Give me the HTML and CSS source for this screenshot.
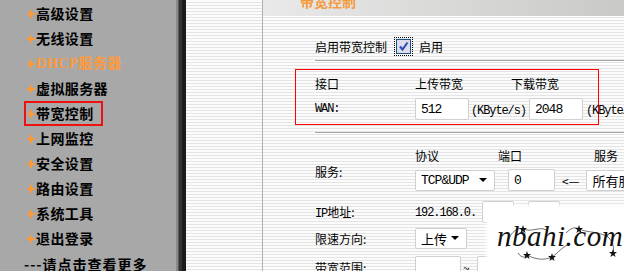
FILE: index.html
```html
<!DOCTYPE html>
<html lang="zh-CN">

<head>
    <meta charset="UTF-8">
    <title>带宽控制</title>
    <link rel="stylesheet" href="styles.css">
</head>

<body>
    <div class="page">
        <nav class="sidebar">
            <ul class="menu">
                <li><a><svg class="dot" viewBox="0 0 8 8"><path d="M3 0h2v3h3v2H5v3H3V5H0V3h3z"/></svg>高级设置</a></li>
                <li><a><svg class="dot" viewBox="0 0 8 8"><path d="M3 0h2v3h3v2H5v3H3V5H0V3h3z"/></svg>无线设置</a></li>
                <li class="dhcp"><a><svg class="dot" viewBox="0 0 8 8"><path d="M3 0h2v3h3v2H5v3H3V5H0V3h3z"/></svg>DHCP服务器</a></li>
                <li><a><svg class="dot" viewBox="0 0 8 8"><path d="M3 0h2v3h3v2H5v3H3V5H0V3h3z"/></svg>虚拟服务器</a></li>
                <li class="current"><a><svg class="dot" viewBox="0 0 8 8"><path d="M3 0h2v3h3v2H5v3H3V5H0V3h3z"/></svg>带宽控制</a></li>
                <li><a><svg class="dot" viewBox="0 0 8 8"><path d="M3 0h2v3h3v2H5v3H3V5H0V3h3z"/></svg>上网监控</a></li>
                <li><a><svg class="dot" viewBox="0 0 8 8"><path d="M3 0h2v3h3v2H5v3H3V5H0V3h3z"/></svg>安全设置</a></li>
                <li><a><svg class="dot" viewBox="0 0 8 8"><path d="M3 0h2v3h3v2H5v3H3V5H0V3h3z"/></svg>路由设置</a></li>
                <li><a><svg class="dot" viewBox="0 0 8 8"><path d="M3 0h2v3h3v2H5v3H3V5H0V3h3z"/></svg>系统工具</a></li>
                <li><a><svg class="dot" viewBox="0 0 8 8"><path d="M3 0h2v3h3v2H5v3H3V5H0V3h3z"/></svg>退出登录</a></li>
            </ul>
            <p class="more">---请点击查看更多</p>
        </nav>
        <div class="divider"></div>
        <div class="gutter"></div>
        <main class="main">
            <div class="title-bar">
                <h1>带宽控制</h1>
            </div>
            <div class="form">
                <div class="row-enable">
                    <span>启用带宽控制</span>
                    <span class="check">
                        <svg viewBox="0 0 15 15" width="15" height="15">
                            <rect x="0.5" y="0.5" width="14" height="14" fill="#dcdcea" stroke="#1c5180"/>
                            <path d="M4 7.5l2.5 3l5-7" fill="none" stroke="#2a48b8" stroke-width="2"/>
                        </svg>
                    </span>
                    <span class="enable-text">启用</span>
                </div>
                <div class="rule"></div>

                <div class="wan-box">
                    <div class="wan-head">
                        <span class="col-label">接口</span>
                        <span class="col-up">上传带宽</span>
                        <span>下载带宽</span>
                    </div>
                    <div class="wan-row">
                        <span class="col-label mono">WAN:</span>
                        <span class="field w54">512</span>
                        <span class="unit mono">(KByte/s)</span>
                        <span class="field w54">2048</span>
                        <span class="unit mono">(KByte/s)</span>
                    </div>
                </div>
                <div class="rule rule-2"></div>

                <div class="service">
                    <span class="service-label">服务:</span>
                    <div class="service-head">
                        <span class="h-proto">协议</span>
                        <span class="h-port">端口</span>
                        <span>服务</span>
                    </div>
                    <div class="service-row">
                        <span class="field select w80 mono">TCP&amp;UDP<svg class="arrow" viewBox="0 0 8 4"><path d="M0 0h8L4 4z"/></svg></span>
                        <span class="field w47 port mono">0</span>
                        <span class="back">&lt;—</span>
                        <span class="field select w80">所有服务<svg class="arrow" viewBox="0 0 8 4"><path d="M0 0h8L4 4z"/></svg></span>
                    </div>
                </div>

                <div class="line ip-row">
                    <span class="col-label"><span class="mono">IP</span>地址:</span>
                    <span class="mono ip-text">192.168.0.</span>
                    <span class="field w32"></span>
                    <span class="field w32 ip-end"></span>
                </div>
                <div class="line dir-row">
                    <span class="col-label">限速方向:</span>
                    <span class="field select w52">上传<svg class="arrow" viewBox="0 0 8 4"><path d="M0 0h8L4 4z"/></svg></span>
                </div>
                <div class="line range-row">
                    <span class="col-label">带宽范围:</span>
                    <span class="field w46"></span>
                    <span class="tilde">~</span>
                    <span class="field w46"></span>
                </div>
            </div>
        </main>

        <div class="watermark">
            <svg class="stars" viewBox="0 0 136 64" width="136" height="64">
                <g fill="none" stroke="#333" stroke-width="0.7">
                    <path d="M18 40 C22 24 30 20 35 22 C45 26 52 18 60 24"/>
                    <path d="M30 46 C34 52 38 50 39 48 C46 52 56 54 64 50 C70 46 74 40 80 38"/>
                    <path d="M78 26 C84 20 88 20 91 22 C100 26 110 24 120 30 C126 36 126 42 125 46"/>
                </g>
                <g fill="#111">
                    <path d="M35 18l1 3l3 0l-2.4 2l1 3l-2.6-1.8l-2.6 1.8l1-3l-2.4-2l3 0z"/>
                    <path d="M39 44l1 3l3 0l-2.4 2l1 3l-2.6-1.8l-2.6 1.8l1-3l-2.4-2l3 0z"/>
                    <path d="M64 46l1 3l3 0l-2.4 2l1 3l-2.6-1.8l-2.6 1.8l1-3l-2.4-2l3 0z"/>
                    <path d="M91 18l1 3l3 0l-2.4 2l1 3l-2.6-1.8l-2.6 1.8l1-3l-2.4-2l3 0z"/>
                    <path d="M125 42l1 3l3 0l-2.4 2l1 3l-2.6-1.8l-2.6 1.8l1-3l-2.4-2l3 0z"/>
                </g>
            </svg>
            <span class="brand">nbahi.com</span>
        </div>
    </div>
</body>

</html>
```

FILE: styles.css
```css
* {
    padding: 0;
    margin: 0;
}

ul {
    list-style-type: none;
}

body {
    width: 624px;
    height: 271px;
    overflow: hidden;
    font-family: "Noto Sans CJK SC", sans-serif;
    font-size: 12px;
    color: #000;
}

.page {
    position: relative;
    display: flex;
    height: 271px;
}

/* 左侧菜单 */
.sidebar {
    flex: none;
    width: 176px;
    background-color: #a8a8a8;
    font-weight: bold;
    font-size: 14px;
    letter-spacing: 0.4px;
    white-space: nowrap;
}

.menu {
    padding-top: 1px;
}

.menu li {
    height: 25px;
    padding-left: 24px;
}

.menu a {
    display: inline-flex;
    align-items: center;
    box-sizing: border-box;
    height: 25px;
    padding-left: 1px;
    border: 2px solid transparent;
    line-height: 21px;
}

.menu .dot {
    width: 8px;
    height: 8px;
    margin-right: 1px;
    fill: #ff9a33;
    flex: none;
}

.menu .dhcp a {
    color: #ff9a3c;
    font-family: "Liberation Serif", "Noto Sans CJK SC", serif;
    letter-spacing: 0.6px;
}

.menu .current a {
    width: 79px;
    border-color: #ee1111;
}

.more {
    padding: 3px 0 0 24px;
    line-height: 20px;
    letter-spacing: 1px;
}

.divider {
    flex: none;
    width: 10px;
    background: linear-gradient(to right, #8a8a8a 0 2px, #595959 2px 3px, #333 3px 6px, #1c1c1c 6px);
}

.gutter,
.main {
    background: repeating-linear-gradient(to bottom, #fcfcfc 0 2px, #e4e4e4 2px 3px);
}

.gutter {
    flex: none;
    width: 76px;
}

/* 右侧内容 */
.main {
    flex: 1;
    min-width: 0;
    border-left: 1px solid #b0b0b0;
    white-space: nowrap;
}

.title-bar {
    height: 16px;
    overflow: hidden;
    padding-left: 37px;
    background: linear-gradient(to right, #e9e9e9, #c9c9c7);
    border-bottom: 1px solid #fff;
}

.title-bar h1 {
    margin-top: -6px;
    font-size: 14px;
    line-height: 14px;
    color: #f59b3f;
}

.form {
    padding: 20px 0 0 52px;
}

.mono {
    font-family: "Liberation Mono", monospace;
    font-size: 12px;
    letter-spacing: -1.1px;
}

.row-enable {
    display: flex;
    align-items: center;
    height: 19px;
}

.check {
    display: flex;
    align-items: center;
    justify-content: center;
    box-sizing: border-box;
    width: 19px;
    height: 19px;
    margin-left: 7px;
    border: 1px dotted #000;
}

.enable-text {
    margin-left: 6px;
}

.rule {
    margin-top: 4px;
    border-top: 1px solid #a5a5a5;
    border-bottom: 1px solid #fff;
}

.rule-2 {
    margin-top: 7px;
}

.wan-box {
    box-sizing: border-box;
    width: 304px;
    height: 56px;
    margin: 7px 0 0 -20px;
    padding-left: 19px;
    border: 1px solid #f00;
}

.wan-head {
    display: flex;
    align-items: center;
    height: 26px;
}

.col-label {
    flex: none;
    width: 100px;
}

.col-up {
    width: 96px;
}

.wan-row {
    display: flex;
    align-items: center;
    height: 22px;
    margin-top: 2px;
}

.field {
    display: inline-flex;
    align-items: center;
    flex: none;
    box-sizing: border-box;
    height: 22px;
    padding-left: 5px;
    border: 1px solid #d0d0d0;
    border-radius: 2px;
    background-color: #fff;
    font-family: "Liberation Mono", monospace;
    font-size: 13px;
    letter-spacing: -1px;
}

.w54 {
    width: 54px;
}

.w80 {
    width: 80px;
}

.w47 {
    width: 47px;
}

.w32 {
    width: 32px;
}

.w52 {
    width: 52px;
}

.w46 {
    width: 46px;
}

.unit {
    flex: none;
    width: 58px;
    margin-left: 2px;
    padding-top: 3px;
}

.wan-row .unit:last-child {
    margin-left: 3px;
}

.select {
    height: 21px;
    position: relative;
    justify-content: space-between;
    padding-right: 7px;
}

.select .arrow {
    width: 8px;
    height: 4px;
    fill: #000;
}

.select:not(.mono) {
    font-family: "Noto Sans CJK SC", sans-serif;
    font-size: 13px;
    letter-spacing: 0;
}

.service {
    display: grid;
    grid-template-columns: 100px auto;
    margin-top: 14px;
}

.service-label {
    grid-row: 1 / 3;
    align-self: center;
    padding-top: 4px;
}

.service-head {
    display: flex;
    height: 16px;
    line-height: 16px;
}

.h-proto {
    width: 83px;
}

.h-port {
    width: 96px;
}

.service-row {
    display: flex;
    align-items: center;
    margin-top: 5px;
}

.port {
    margin-left: 13px;
}

.back {
    margin: 0 7px;
    font-size: 12px;
}

.line {
    display: flex;
    align-items: center;
    height: 22px;
}

.ip-row {
    margin-top: 10px;
}

.ip-text {
    width: 67px;
    padding-top: 2px;
}

.ip-end {
    margin-left: 14px;
}

.dir-row {
    margin-top: 4px;
}

.range-row {
    margin-top: 7px;
}

.tilde {
    width: 14px;
    padding-left: 2px;
}

/* 水印 */
.watermark {
    position: absolute;
    left: 488px;
    top: 207px;
    width: 136px;
    height: 64px;
    display: flex;
    align-items: center;
    background-color: #fff;
    box-shadow: 0 0 3px 2px #fff;
}

.stars {
    position: absolute;
    left: 0;
    top: 0;
}

.brand {
    position: relative;
    padding: 0 0 6px 9px;
    font-family: "Liberation Serif", serif;
    font-style: italic;
    font-size: 29px;
    letter-spacing: 0.5px;
    color: #111;
}
```
